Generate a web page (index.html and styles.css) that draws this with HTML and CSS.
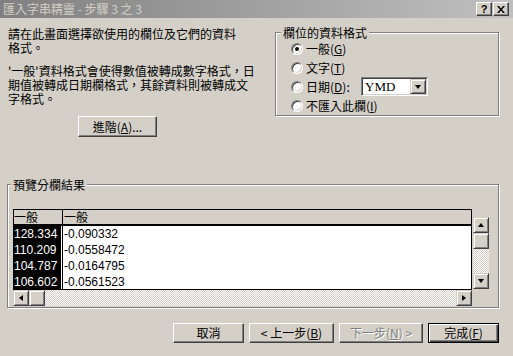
FILE: index.html
```html
<!DOCTYPE html>
<html>
<head>
  <meta charset="utf-8">
  <title>匯入字串精靈 - 步驟 3 之 3</title>
  <link rel="stylesheet" href="styles.css">
</head>
<body>
  <div class="titlebar">
    <span class="title">匯入字串精靈 - 步驟 3 之 3</span>
    <div class="caption-btns">
      <span class="cap-btn">?</span>
      <span class="cap-btn">
        <svg width="8" height="7" viewBox="0 0 8 7"><path d="M0 0h2l2 2.5L6 0h2L5 3.5 8 7H6L4 4.5 2 7H0l3-3.5z" fill="#000"/></svg>
      </span>
    </div>
  </div>

  <div class="dialog">
    <div class="top">
      <div class="intro">
        <p>
          <span class="line">請在此畫面選擇欲使用的欄位及它們的資料</span>
          <span class="line">格式。</span>
        </p>
        <p>
          <span class="line">'一般'資料格式會使得數值被轉成數字格式，日</span>
          <span class="line">期值被轉成日期欄格式，其餘資料則被轉成文</span>
          <span class="line">字格式。</span>
        </p>
        <button class="btn advanced">進階(<u>A</u>)...</button>
      </div>

      <fieldset class="group format-group">
        <legend>欄位的資料格式</legend>
        <div class="options">
          <div class="radio-row"><span class="radio checked"></span>一般(<u>G</u>)</div>
          <div class="radio-row"><span class="radio"></span>文字(<u>T</u>)</div>
          <div class="radio-row">
            <span class="radio"></span><span class="date-label">日期(<u>D</u>):</span>
            <div class="select">
              <span class="select-value">YMD</span>
              <span class="sb-btn"><span class="arrow-down"></span></span>
            </div>
          </div>
          <div class="radio-row"><span class="radio"></span>不匯入此欄(<u>I</u>)</div>
        </div>
      </fieldset>
    </div>

    <fieldset class="group preview-group">
      <legend>預覽分欄結果</legend>
      <div class="preview-body">
        <div class="table-col">
          <div class="grid">
            <div class="grid-head">
              <span class="cell">一般</span>
              <span class="cell cell-line">一般</span>
            </div>
            <div class="grid-row"><span class="cell cell-sel">128.334</span><span class="cell cell-line">-0.090332</span></div>
            <div class="grid-row"><span class="cell cell-sel">110.209</span><span class="cell cell-line">-0.0558472</span></div>
            <div class="grid-row"><span class="cell cell-sel">104.787</span><span class="cell cell-line">-0.0164795</span></div>
            <div class="grid-row"><span class="cell cell-sel">106.602</span><span class="cell cell-line">-0.0561523</span></div>
          </div>
          <div class="hscroll">
            <span class="sb-btn"><span class="arrow-left"></span></span>
            <span class="sb-btn"></span>
            <span class="sb-track"></span>
            <span class="sb-btn"><span class="arrow-right"></span></span>
          </div>
        </div>
        <div class="vscroll">
          <span class="sb-btn"><span class="arrow-up"></span></span>
          <span class="sb-btn"></span>
          <span class="sb-track"></span>
          <span class="sb-btn"><span class="arrow-down"></span></span>
        </div>
      </div>
    </fieldset>

    <div class="actions">
      <button class="btn cancel">取消</button>
      <button class="btn back">&lt; 上一步(<u>B</u>)</button>
      <button class="btn next" disabled>下一步(<u>N</u>) &gt;</button>
      <button class="btn finish">完成(<u>F</u>)</button>
    </div>
  </div>
</body>
</html>
```

FILE: styles.css
```css
body {
  margin: 0;
  width: 513px;
  height: 356px;
  overflow: hidden;
  background-color: #d4d0c8;
  font-family: "Noto Sans CJK TC", sans-serif;
  font-size: 12px;
  color: #000;
}

/* Title bar */
.titlebar {
  height: 18px;
  display: flex;
  align-items: center;
  justify-content: space-between;
  padding-left: 3px;
  background: linear-gradient(to right, #808080, #c0c0c0);
}

.title {
  color: #d4d0c8;
  line-height: 18px;
}

.caption-btns {
  display: flex;
  gap: 1px;
  margin-right: 4px;
}

.cap-btn {
  width: 16px;
  height: 14px;
  box-sizing: border-box;
  display: flex;
  align-items: center;
  justify-content: center;
  background-color: #d4d0c8;
  border: 1px solid;
  border-color: #fff #404040 #404040 #fff;
  box-shadow: inset -1px -1px #808080;
  font: bold 11px "Liberation Sans", sans-serif;
}

/* Dialog body */
.dialog {
  padding: 0 14px 0 8px;
}

.top {
  display: flex;
  justify-content: space-between;
  align-items: flex-start;
  height: 120px;
}

.intro {
  padding-top: 9px;
}

.intro p {
  margin: 0 0 9px;
}

.intro p:last-of-type {
  margin-bottom: 10px;
}

.intro .line {
  display: block;
  height: 14px;
  line-height: 14px;
  white-space: nowrap;
}

/* Buttons */
.btn {
  box-sizing: border-box;
  height: 20px;
  padding: 0;
  background-color: #d4d0c8;
  border: 1px solid;
  border-color: #fff #404040 #404040 #fff;
  box-shadow: inset -1px -1px #808080;
  font-family: "Noto Sans CJK TC", sans-serif;
  font-size: 12px;
  line-height: 16px;
  color: #000;
}

.advanced {
  width: 79px;
  height: 21px;
  margin-left: 70px;
}

.btn:disabled {
  color: #808080;
  text-shadow: 1px 1px #fff;
}

.finish {
  border-color: #000;
  box-shadow: inset 1px 1px #fff, inset -1px -1px #404040, inset -2px -2px #808080;
}

.cancel { width: 71px; }
.back { width: 85px; }
.next { width: 84px; }
.finish { width: 71px; }

/* Group boxes */
.group {
  margin: 0;
  padding: 0;
  min-width: 0;
  box-sizing: border-box;
  border: 1px solid #808080;
  box-shadow: inset 1px 1px #fff, 1px 1px #fff;
}

.group legend {
  padding: 0 2px;
  line-height: 13px;
  background-color: #d4d0c8;
}

.format-group {
  width: 224px;
  margin-top: 8px;
}

.format-group legend {
  margin-left: 5px;
}

.options {
  padding-left: 15px;
}

.radio-row {
  display: flex;
  align-items: center;
  height: 19px;
}

.radio {
  position: relative;
  width: 12px;
  height: 12px;
  box-sizing: border-box;
  margin-right: 3px;
  border-radius: 50%;
  background-color: #fff;
  border: 1px solid;
  border-color: #808080 #fff #fff #808080;
  box-shadow: inset 1px 1px #404040, inset -1px -1px #d4d0c8;
}

.radio.checked::after {
  content: "";
  position: absolute;
  left: 3px;
  top: 3px;
  width: 4px;
  height: 4px;
  border-radius: 50%;
  background-color: #000;
}

.date-label {
  width: 55px;
}

.select {
  width: 67px;
  height: 19px;
  box-sizing: border-box;
  display: flex;
  align-items: center;
  justify-content: space-between;
  padding: 1px;
  background-color: #fff;
  border: 1px solid;
  border-color: #808080 #fff #fff #808080;
  box-shadow: inset 1px 1px #404040, inset -1px -1px #d4d0c8;
}

.select-value {
  padding-left: 2px;
  font-family: "Liberation Serif", serif;
  font-size: 13px;
}

.select .sb-btn {
  height: 15px;
}

/* Preview */
.preview-group {
  width: 492px;
  margin: 40px 0 0 -1px;
}

.preview-group legend {
  margin-left: 3px;
}

.preview-body {
  display: flex;
  padding: 18px 0 1px 5px;
}

.table-col {
  width: 459px;
}

.grid {
  height: 81px;
  box-sizing: border-box;
  overflow: hidden;
  border: 1px solid #000;
  background-color: #fff;
}

.grid-head,
.grid-row {
  display: grid;
  grid-template-columns: 48px 1fr;
}

.grid-head {
  height: 14px;
  line-height: 14px;
  background-color: #d4d0c8;
  border-bottom: 2px solid #000;
}

.grid-row {
  height: 16px;
  line-height: 16px;
  font-family: "Liberation Sans", sans-serif;
}

.cell {
  white-space: nowrap;
}

.cell-line {
  border-left: 1px solid #000;
  padding-left: 1px;
}

.cell-sel {
  background-color: #000;
  color: #fff;
  border-right: 1px solid #fff;
}

/* Scrollbars */
.sb-btn {
  width: 16px;
  height: 16px;
  flex: none;
  box-sizing: border-box;
  display: flex;
  align-items: center;
  justify-content: center;
  background-color: #d4d0c8;
  border: 1px solid;
  border-color: #d4d0c8 #404040 #404040 #d4d0c8;
  box-shadow: inset 1px 1px #fff, inset -1px -1px #808080;
}

.sb-track {
  flex: 1;
  background-image: conic-gradient(#fff 25%, #d4d0c8 0 50%, #fff 0 75%, #d4d0c8 0);
  background-size: 2px 2px;
}

.hscroll {
  display: flex;
  height: 16px;
}

.vscroll {
  display: flex;
  flex-direction: column;
  width: 16px;
  height: 72px;
  margin: 8px 0 0 1px;
}

.arrow-up,
.arrow-down {
  width: 0;
  height: 0;
  border-left: 3px solid transparent;
  border-right: 3px solid transparent;
}

.arrow-up { border-bottom: 4px solid #000; }
.arrow-down { border-top: 4px solid #000; }

.arrow-left,
.arrow-right {
  width: 0;
  height: 0;
  border-top: 3px solid transparent;
  border-bottom: 3px solid transparent;
}

.arrow-left { border-right: 4px solid #000; }
.arrow-right { border-left: 4px solid #000; }

/* Bottom buttons */
.actions {
  display: flex;
  justify-content: flex-end;
  gap: 5px;
  margin-top: 15px;
}
```
